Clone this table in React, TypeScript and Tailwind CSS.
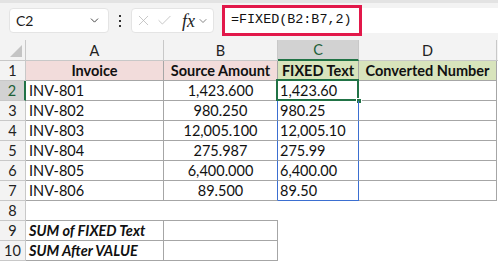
import { Check, ChevronDown, X } from "lucide-react";

const CELL = "border-[#a6a6a6]";

type Row = { n: number; a: string; b: string; c: string };

const rows: Row[] = [
  { n: 2, a: "INV-801", b: "1,423.600", c: "1,423.60" },
  { n: 3, a: "INV-802", b: "980.250", c: "980.25" },
  { n: 4, a: "INV-803", b: "12,005.100", c: "12,005.10" },
  { n: 5, a: "INV-804", b: "275.987", c: "275.99" },
  { n: 6, a: "INV-805", b: "6,400.000", c: "6,400.00" },
  { n: 7, a: "INV-806", b: "89.500", c: "89.50" },
];

function RowHead({ n, active }: { n: number; active?: boolean }) {
  return active ? (
    <div className="flex items-center justify-center border-b border-r-2 border-b-[#c8c8c8] border-r-[#217346] bg-[#d2d2d2] text-[#1d5f38]">
      {n}
    </div>
  ) : (
    <div className="flex items-center justify-center border-b border-r border-[#c8c8c8] bg-[#f3f3f3] text-[#222]">{n}</div>
  );
}

function Toolbar() {
  return (
    <div className="flex h-[40px] items-start border-t-[3px] border-[#e3e3e3] bg-[#f3f3f3] pt-[5px]">
      <div className="ml-[9px] flex h-[25px] w-[100px] items-center justify-between rounded-[4px] border border-[#e4e4e4] bg-white pl-[6px] pr-[7px] text-[14px] text-[#1a1a1a]">
        <span>C2</span>
        <ChevronDown size={13} strokeWidth={1.8} className="text-[#444]" />
      </div>
      <div className="ml-[8px] flex h-[25px] w-[6px] flex-col items-center justify-center gap-[3px]">
        <span className="h-[2px] w-[2px] bg-[#333]" />
        <span className="h-[2px] w-[2px] bg-[#333]" />
        <span className="h-[2px] w-[2px] bg-[#333]" />
      </div>
      <div className="ml-[8px] flex h-[25px] w-[83px] items-center rounded-[4px] border border-[#e4e4e4] bg-white pl-[3px]">
        <X size={17} strokeWidth={1.1} className="text-[#b8b8b8]" />
        <Check size={17} strokeWidth={1.1} className="ml-[4px] text-[#b8b8b8]" />
        <span className="ml-[9px] font-['Liberation_Serif',serif] text-[18px] italic leading-none text-[#222]">fx</span>
        <ChevronDown size={12} strokeWidth={1.6} className="ml-[2px] text-[#666]" />
      </div>
      <div className="ml-[8px] flex h-[25px] flex-1 items-center bg-white">
        <span className="flex h-[31px] items-center border-[3px] border-[#e2184a] bg-white pl-[6px] pr-[7px] font-['Liberation_Mono',monospace] text-[13.4px] text-[#111]">
          =FIXED(B2:B7,2)
        </span>
      </div>
    </div>
  );
}

export default function App() {
  return (
    <div className="h-[262px] w-[498px] overflow-hidden bg-white font-['Lato',sans-serif] text-[14.5px] text-[#111]">
      <Toolbar />
      <div className="grid grid-cols-[26px_138px_114px_81px_138px_1fr] grid-rows-[21px_repeat(10,20px)] leading-[19px]">
        {/* column header row */}
        <div className="relative border-b border-r border-[#c8c8c8] bg-[#f3f3f3]">
          <span className="absolute bottom-[3px] right-[3px] h-0 w-0 border-b-[12px] border-l-[12px] border-b-[#c4c4c4] border-l-transparent" />
        </div>
        <div className="flex items-center justify-center border-b border-r border-[#c8c8c8] bg-[#f3f3f3] text-[#222]">A</div>
        <div className="flex items-center justify-center border-b border-r border-[#c8c8c8] bg-[#f3f3f3] text-[#222]">B</div>
        <div className="flex items-center justify-center border-b-2 border-r border-b-[#217346] border-r-[#c8c8c8] bg-[#d2d2d2] text-[#1d5f38]">C</div>
        <div className="flex items-center justify-center border-b border-r border-[#c8c8c8] bg-[#f3f3f3] text-[#222]">D</div>
        <div className="border-b border-[#c8c8c8] bg-[#f3f3f3]" />

        {/* row 1 */}
        <RowHead n={1} />
        <div className={`border-b border-r ${CELL} bg-[#f2dcdb] text-center font-bold`}>Invoice</div>
        <div className={`border-b border-r ${CELL} bg-[#f2dcdb] text-center font-bold`}>Source Amount</div>
        <div className={`border-b border-r ${CELL} bg-[#d8e4bc] text-center font-bold`}>FIXED Text</div>
        <div className={`border-b border-r ${CELL} bg-[#d8e4bc] text-center font-bold`}>Converted Number</div>
        <div />

        {rows.map((r, i) => {
          const last = i === rows.length - 1;
          return [
            <RowHead key={`h${r.n}`} n={r.n} active={r.n === 2} />,
            <div key={`a${r.n}`} className={`border-b border-r ${CELL} pl-[3px]`}>{r.a}</div>,
            <div key={`b${r.n}`} className="border-b border-r border-b-[#a6a6a6] border-r-[#3b6fd1] text-center">{r.b}</div>,
            <div
              key={`c${r.n}`}
              className={`relative border-r border-r-[#3b6fd1] pl-[2px] ${last ? "border-b border-b-[#3b6fd1]" : "border-b border-b-[#a6a6a6]"}`}
            >
              {r.c}
              {r.n === 2 && (
                <>
                  <span className="pointer-events-none absolute -left-[2px] -top-[2px] h-[22px] w-[83px] border-2 border-[#217346]" />
                  <span className="absolute -bottom-[4px] -right-[4px] h-[6px] w-[6px] border border-white bg-[#217346]" />
                </>
              )}
            </div>,
            <div key={`d${r.n}`} className={`border-b border-r ${CELL}`} />,
            <div key={`e${r.n}`} />,
          ];
        })}

        {/* row 8 */}
        <RowHead n={8} />
        <div className={`border-b ${CELL}`} />
        <div className={`border-b ${CELL}`} />
        <div />
        <div />
        <div />

        {/* rows 9-10 */}
        <RowHead n={9} />
        <div className={`border-b border-r ${CELL} pl-[3px] font-bold italic`}>SUM of FIXED Text</div>
        <div className={`border-b border-r ${CELL}`} />
        <div />
        <div />
        <div />

        <RowHead n={10} />
        <div className={`border-b border-r ${CELL} pl-[3px] font-bold italic`}>SUM After VALUE</div>
        <div className={`border-b border-r ${CELL}`} />
        <div />
        <div />
        <div />
      </div>
    </div>
  );
}
